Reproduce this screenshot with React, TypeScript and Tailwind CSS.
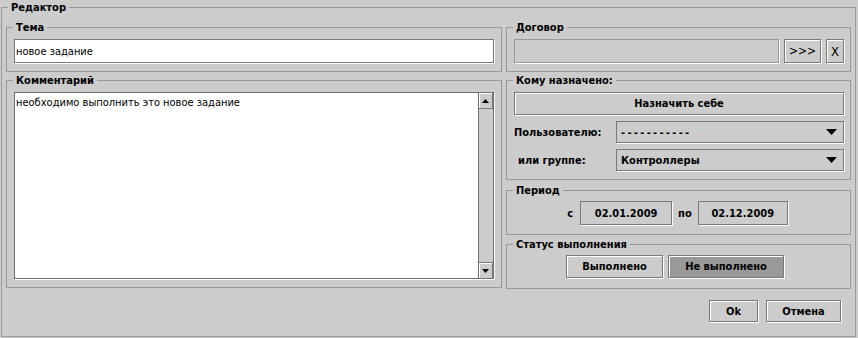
import React from "react";

function Box({
  legend,
  className = "",
  children,
}: {
  legend: string;
  className?: string;
  children?: React.ReactNode;
}) {
  return (
    <fieldset className={`min-w-0 border border-[#999999] ${className}`}>
      <legend className="ml-[6px] h-[13px] px-[3px] text-[11px] font-bold leading-[13px]">
        {legend}
      </legend>
      {children}
    </fieldset>
  );
}

const raised =
  "border border-[#7a7a7a] bg-[#cccccc] shadow-[inset_1px_1px_0_#ffffff,1px_1px_0_#ffffff]";

function Btn({
  children,
  className = "",
}: {
  children: React.ReactNode;
  className?: string;
}) {
  return (
    <div
      className={`flex items-center justify-center text-[11px] font-bold leading-none ${raised} ${className}`}
    >
      {children}
    </div>
  );
}

function Caret() {
  return (
    <svg width="11" height="6" viewBox="0 0 11 6" className="mr-[6px] shrink-0">
      <polygon points="0,0 11,0 5.5,6" fill="#000" />
    </svg>
  );
}

function Select({ value, dashed = false }: { value: string; dashed?: boolean }) {
  return (
    <div className="flex h-[22px] w-[228px] items-center border border-[#7a7a7a] bg-[#cccccc] shadow-[1px_1px_0_#ffffff]">
      <span
        className={`flex-1 pl-[4px] text-[11px] font-bold leading-none ${dashed ? "tracking-[2.3px]" : ""}`}
      >
        {value}
      </span>
      <Caret />
    </div>
  );
}

export default function App() {
  return (
    <div className="h-[338px] w-[858px] bg-[#cccccc] pl-[1px] pt-[1px] font-['DejaVu_Sans_Condensed','DejaVu_Sans',sans-serif] text-black">
      <fieldset className="h-[336px] w-[855px] min-w-0 border border-[#999999]">
        <legend className="ml-[6px] h-[13px] px-[3px] text-[11px] font-bold leading-[13px]">
          Редактор
        </legend>
        <div className="flex gap-[4px] px-[4px] pt-[7px]">
          {/* left column */}
          <div className="flex w-[496px] flex-col gap-[2px]">
            <Box legend="Тема" className="h-[51px]">
              <div className="mx-[7px] mt-[5px] flex h-[24px] items-center border border-[#7a7a7a] bg-white pl-[1px] text-[11px] leading-none shadow-[1px_1px_0_#ffffff]">
                новое задание
              </div>
            </Box>
            <Box legend="Комментарий" className="h-[214px]">
              <div className="mx-[7px] mt-[5px] flex h-[187px] border border-[#6f6f6f] bg-white shadow-[1px_1px_0_#ffffff]">
                <div className="flex-1 pl-[1px] pt-[3px] text-[11px] leading-[13px]">
                  необходимо выполнить это новое задание
                </div>
                <div className="flex w-[15px] flex-col border-l border-[#6f6f6f] bg-[#cccccc]">
                  <div className="flex h-[16px] items-center justify-center border-b border-r border-[#7a7a7a] shadow-[inset_1px_1px_0_#ffffff]">
                    <svg width="7" height="4" viewBox="0 0 7 4">
                      <polygon points="0,4 7,4 3.5,0" fill="#000" />
                    </svg>
                  </div>
                  <div className="flex-1" />
                  <div className="flex h-[16px] items-center justify-center border-r border-t border-[#7a7a7a] shadow-[inset_1px_1px_0_#ffffff]">
                    <svg width="7" height="4" viewBox="0 0 7 4">
                      <polygon points="0,0 7,0 3.5,4" fill="#000" />
                    </svg>
                  </div>
                </div>
              </div>
            </Box>
          </div>

          {/* right column */}
          <div className="flex w-[345px] flex-col">
            <Box legend="Договор" className="h-[51px]">
              <div className="mt-[5px] flex gap-[5px] pl-[7px] pr-[6px]">
                <div className="h-[24px] flex-1 border border-[#999999] bg-[#cccccc] shadow-[1px_1px_0_#ffffff]" />
                <Btn className="h-[24px] w-[37px] !font-normal !text-[12px]">&gt;&gt;&gt;</Btn>
                <Btn className="h-[24px] w-[18px] !font-normal !text-[13px]">X</Btn>
              </div>
            </Box>
            <Box legend="Кому назначено:" className="mt-[2px] h-[106px]">
              <div className="mt-[5px] flex flex-col pl-[7px] pr-[6px]">
                <Btn className="h-[23px] w-full">Назначить себе</Btn>
                <div className="mt-[6px] flex items-center">
                  <span className="w-[102px] text-[11px] font-bold leading-none">Пользователю:</span>
                  <Select value="-----------" dashed />
                </div>
                <div className="mt-[6px] flex items-center">
                  <span className="w-[102px] pl-[4px] text-[11px] font-bold leading-none">
                    или группе:
                  </span>
                  <Select value="Контроллеры" />
                </div>
              </div>
            </Box>
            <Box legend="Период" className="mt-[4px] h-[51px]">
              <div className="mt-[4px] flex items-center justify-center pr-[2px]">
                <span className="mr-[7px] text-[11px] font-bold leading-none">с</span>
                <Btn className="h-[24px] w-[92px] !shadow-[1px_1px_0_#ffffff]">02.01.2009</Btn>
                <span className="ml-[6px] mr-[6px] text-[11px] font-bold leading-none">по</span>
                <Btn className="h-[24px] w-[90px] !shadow-[1px_1px_0_#ffffff]">02.12.2009</Btn>
              </div>
            </Box>
            <Box legend="Статус выполнения" className="mt-[3px] h-[51px]">
              <div className="mt-[4px] flex justify-center gap-[5px] pr-[7px]">
                <Btn className="h-[23px] w-[97px]">Выполнено</Btn>
                <Btn className="h-[23px] w-[116px] !bg-[#999999]">Не выполнено</Btn>
              </div>
            </Box>
          </div>
        </div>
        <div className="mt-[11px] flex justify-end gap-[8px] pr-[14px]">
          <Btn className="h-[22px] w-[49px]">Ok</Btn>
          <Btn className="h-[22px] w-[75px]">Отмена</Btn>
        </div>
      </fieldset>
    </div>
  );
}
